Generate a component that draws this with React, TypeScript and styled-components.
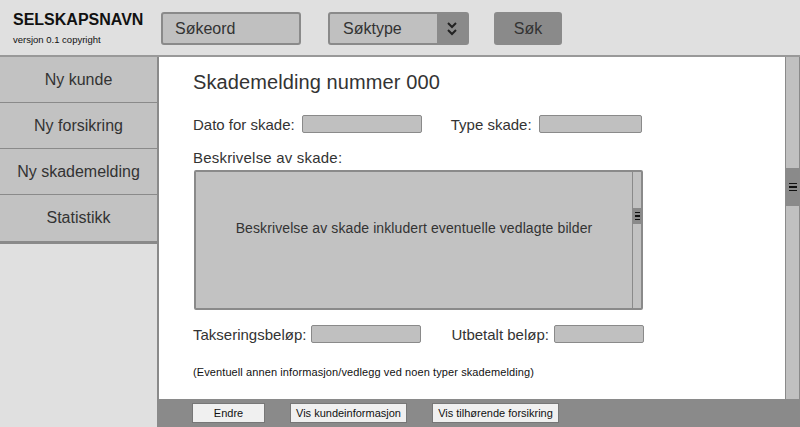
import React from "react";
import styled, { createGlobalStyle } from "styled-components";

const Global = createGlobalStyle`
  html, body { margin: 0; padding: 0; }
  body { font-family: "Liberation Sans", Arial, sans-serif; color: #333; background: #e0e0e0; }
  * { box-sizing: border-box; }
`;

const Page = styled.div`
  width: 800px;
  height: 427px;
  display: flex;
  flex-direction: column;
  overflow: hidden;
  background: #e0e0e0;
`;

const Header = styled.header`
  height: 57px;
  flex: none;
  display: flex;
  align-items: flex-start;
  padding: 12px 0 0 0;
  border-bottom: 2px solid #999;
  background: #e0e0e0;
`;

const Brand = styled.div`
  width: 161px;
  padding-left: 13px;
  display: flex;
  flex-direction: column;
`;

const BrandName = styled.div`
  font-weight: bold;
  font-size: 16px;
  color: #111;
  line-height: 16px;
`;

const Version = styled.div`
  font-size: 9.5px;
  color: #111;
  margin-top: 6px;
`;

const Field = styled.div<{ $w: number }>`
  width: ${(p) => p.$w}px;
  height: 33px;
  background: #c0c0c0;
  border: 2px solid #8a8a8a;
  border-radius: 3px;
  display: flex;
  align-items: center;
  font-size: 16px;
  color: #333;
  padding-left: 12px;
`;

const Select = styled.div`
  width: 141px;
  height: 33px;
  margin-left: 27px;
  border: 2px solid #8a8a8a;
  border-radius: 3px;
  display: flex;
  background: #8a8a8a;
  overflow: hidden;
`;

const SelectText = styled.div`
  flex: 1;
  background: #c0c0c0;
  display: flex;
  align-items: center;
  padding-left: 13px;
  font-size: 16px;
`;

const SelectArrow = styled.div`
  width: 30px;
  display: flex;
  align-items: center;
  justify-content: center;
`;

const SearchButton = styled.div`
  width: 68px;
  height: 33px;
  margin-left: 25px;
  background: #8a8a8a;
  border-radius: 3px;
  display: flex;
  align-items: center;
  justify-content: center;
  font-size: 16px;
  color: #333;
`;

const Body = styled.div`
  flex: 1;
  display: flex;
  min-height: 0;
`;

const Sidebar = styled.nav`
  width: 159px;
  flex: none;
  border-right: 2px solid #8a8a8a;
  background: #e0e0e0;
`;

const Menu = styled.div`
  background: #c2c2c2;
  border-bottom: 3px solid #8a8a8a;
`;

const MenuItem = styled.div<{ $last?: boolean }>`
  height: 46px;
  display: flex;
  align-items: center;
  justify-content: center;
  font-size: 16px;
  color: #333;
  border-bottom: ${(p) => (p.$last ? "none" : "1px solid #8a8a8a")};
`;

const MainCol = styled.div`
  flex: 1;
  display: flex;
  flex-direction: column;
  min-width: 0;
`;

const ContentRow = styled.div`
  flex: 1;
  display: flex;
  background: #fff;
`;

const Content = styled.main`
  flex: 1;
  padding: 13px 0 0 34px;
`;

const Title = styled.h1`
  margin: 0;
  font-size: 20px;
  font-weight: normal;
  color: #333;
  line-height: 24px;
  letter-spacing: 0.1px;
`;

const FormRow = styled.div<{ $mt: number }>`
  display: flex;
  align-items: center;
  margin-top: ${(p) => p.$mt}px;
  font-size: 15px;
  color: #333;
  height: 18px;
`;

const Label = styled.span<{ $ml?: number; $mr: number }>`
  margin-left: ${(p) => p.$ml ?? 0}px;
  margin-right: ${(p) => p.$mr}px;
`;

const SmallInput = styled.div<{ $w: number }>`
  width: ${(p) => p.$w}px;
  height: 18px;
  background: #c0c0c0;
  border: 1.5px solid #8a8a8a;
  border-radius: 2px;
`;

const SectionLabel = styled.div`
  margin-top: 16px;
  font-size: 15px;
  letter-spacing: 0.2px;
  color: #333;
`;

const TextArea = styled.div`
  margin-top: 4px;
  margin-left: 1px;
  width: 449px;
  height: 140px;
  background: #c2c2c2;
  border: 2px solid #8a8a8a;
  border-radius: 2px;
  display: flex;
`;

const TextAreaBody = styled.div`
  flex: 1;
  display: flex;
  align-items: center;
  justify-content: center;
  font-size: 14px;
  letter-spacing: 0.1px;
  color: #333;
  padding-bottom: 25px;
`;

const InnerScroll = styled.div`
  width: 9px;
  border-left: 1px solid #8a8a8a;
  padding-top: 36px;
`;

const Thumb = styled.div<{ $h: number }>`
  height: ${(p) => p.$h}px;
  background: #8a8a8a;
  display: flex;
  flex-direction: column;
  align-items: center;
  justify-content: center;
  gap: 2px;
`;

const Bar = styled.div<{ $w: number }>`
  width: ${(p) => p.$w}px;
  height: 1.5px;
  background: #111;
`;

const Note = styled.div`
  margin-top: 23px;
  font-size: 11px;
  letter-spacing: 0.1px;
  color: #111;
`;

const PageScroll = styled.div`
  width: 15px;
  flex: none;
  background: #c0c0c0;
  border-left: 1.5px solid #8a8a8a;
  border-right: 1.5px solid #8a8a8a;
  padding-top: 111px;
`;

const BottomBar = styled.footer`
  height: 28px;
  flex: none;
  background: #8a8a8a;
  display: flex;
  align-items: center;
  padding-left: 33px;
  gap: 25px;
`;

const BarButton = styled.div<{ $w: number }>`
  width: ${(p) => p.$w}px;
  flex: none;
  height: 20px;
  background: #f0f0f0;
  border: 1px solid #777;
  display: flex;
  align-items: center;
  justify-content: center;
  font-size: 11px;
  color: #111;
`;

const Chevrons = () => (
  <svg width="12" height="16" viewBox="0 0 12 16">
    <path d="M2 2 L6 6 L10 2" fill="none" stroke="#222" strokeWidth="2" />
    <path d="M2 9 L6 13 L10 9" fill="none" stroke="#222" strokeWidth="2" />
  </svg>
);

export default function App() {
  return (
    <Page>
      <Global />
      <Header>
        <Brand>
          <BrandName>SELSKAPSNAVN</BrandName>
          <Version>versjon 0.1 copyright</Version>
        </Brand>
        <Field $w={140}>Søkeord</Field>
        <Select>
          <SelectText>Søktype</SelectText>
          <SelectArrow>
            <Chevrons />
          </SelectArrow>
        </Select>
        <SearchButton>Søk</SearchButton>
      </Header>
      <Body>
        <Sidebar>
          <Menu>
            <MenuItem>Ny kunde</MenuItem>
            <MenuItem>Ny forsikring</MenuItem>
            <MenuItem>Ny skademelding</MenuItem>
            <MenuItem $last>Statistikk</MenuItem>
          </Menu>
        </Sidebar>
        <MainCol>
          <ContentRow>
            <Content>
              <Title>Skademelding nummer 000</Title>
              <FormRow $mt={21}>
                <Label $mr={7}>Dato for skade:</Label>
                <SmallInput $w={120} />
                <Label $ml={29} $mr={7}>Type skade:</Label>
                <SmallInput $w={103} />
              </FormRow>
              <SectionLabel>Beskrivelse av skade:</SectionLabel>
              <TextArea>
                <TextAreaBody>Beskrivelse av skade inkludert eventuelle vedlagte bilder</TextAreaBody>
                <InnerScroll>
                  <Thumb $h={16}>
                    <Bar $w={5} />
                    <Bar $w={5} />
                    <Bar $w={5} />
                  </Thumb>
                </InnerScroll>
              </TextArea>
              <FormRow $mt={15}>
                <Label $mr={5}>Takseringsbeløp:</Label>
                <SmallInput $w={110} />
                <Label $ml={30} $mr={5}>Utbetalt beløp:</Label>
                <SmallInput $w={90} />
              </FormRow>
              <Note>(Eventuell annen informasjon/vedlegg ved noen typer skademelding)</Note>
            </Content>
            <PageScroll>
              <Thumb $h={38}>
                <Bar $w={8} />
                <Bar $w={8} />
                <Bar $w={8} />
              </Thumb>
            </PageScroll>
          </ContentRow>
          <BottomBar>
            <BarButton $w={73}>Endre</BarButton>
            <BarButton $w={117}>Vis kundeinformasjon</BarButton>
            <BarButton $w={127}>Vis tilhørende forsikring</BarButton>
          </BottomBar>
        </MainCol>
      </Body>
    </Page>
  );
}
